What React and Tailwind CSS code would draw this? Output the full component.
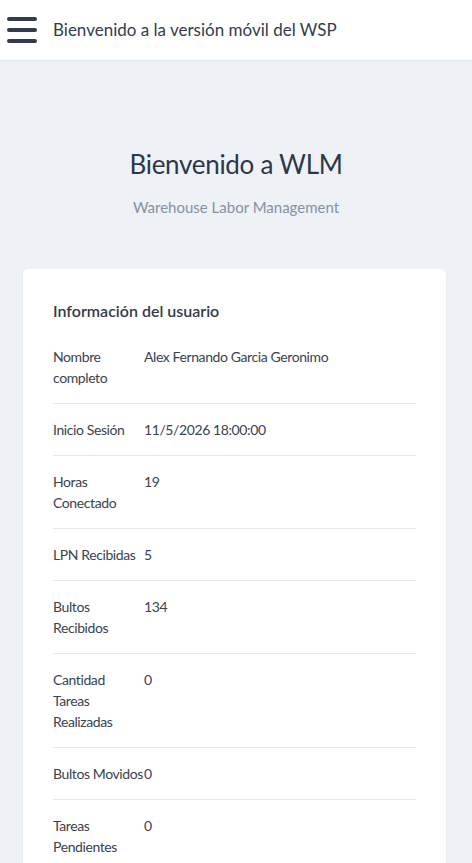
import React from "react";

const rows = [
  ["Nombre completo", "Alex Fernando Garcia Geronimo"],
  ["Inicio Sesión", "11/5/2026 18:00:00"],
  ["Horas Conectado", "19"],
  ["LPN Recibidas", "5"],
  ["Bultos Recibidos", "134"],
  ["Cantidad Tareas Realizadas", "0"],
  ["Bultos Movidos", "0"],
  ["Tareas Pendientes", "0"],
];

export default function App() {
  return (
    <div className="min-h-screen bg-[#eef2f6] text-[#2d3748]" style={{ fontFamily: "Lato, 'Noto Sans', sans-serif" }}>
      {/* Header */}
      <header className="flex items-center h-[61px] bg-white border-b border-[#e2e8f0]">
        <button className="flex flex-col gap-[7px] pl-[7px] pr-4">
          <span className="block w-[30px] h-[4px] rounded-full bg-[#323c4c]"></span>
          <span className="block w-[30px] h-[4px] rounded-full bg-[#323c4c]"></span>
          <span className="block w-[30px] h-[4px] rounded-full bg-[#323c4c]"></span>
        </button>
        <h1 className="text-[17px] text-[#323c4c]">Bienvenido a la versión móvil del WSP</h1>
      </header>

      {/* Welcome */}
      <div className="flex flex-col items-center pt-[85px] pb-[50px]">
        <h2 className="text-[26px] leading-[36px] tracking-[-0.3px] text-[#2d3748]">Bienvenido a WLM</h2>
        <p className="mt-[13px] text-[15px] leading-6 text-[#8591a5]">Warehouse Labor Management</p>
      </div>

      {/* Card */}
      <div className="ml-[23px] mr-[26px] bg-white rounded-[5px] shadow-[0_1px_3px_rgba(0,0,0,0.06)] px-[30px] pt-[30px] pb-8">
        <h3 className="text-[16px] leading-6 font-semibold text-[#333b48] mb-2">Información del usuario</h3>
        <div className="text-[14px] leading-[21px] tracking-[-0.4px] text-[#3a4250]">
          {rows.map(([label, value], i) => (
            <div key={i} className={"grid grid-cols-[91px_1fr] py-[15px] " + (i > 0 ? "border-t border-[#e5e8ec]" : "")}>
              <div>{label}</div>
              <div>{value}</div>
            </div>
          ))}
        </div>
      </div>
    </div>
  );
}
